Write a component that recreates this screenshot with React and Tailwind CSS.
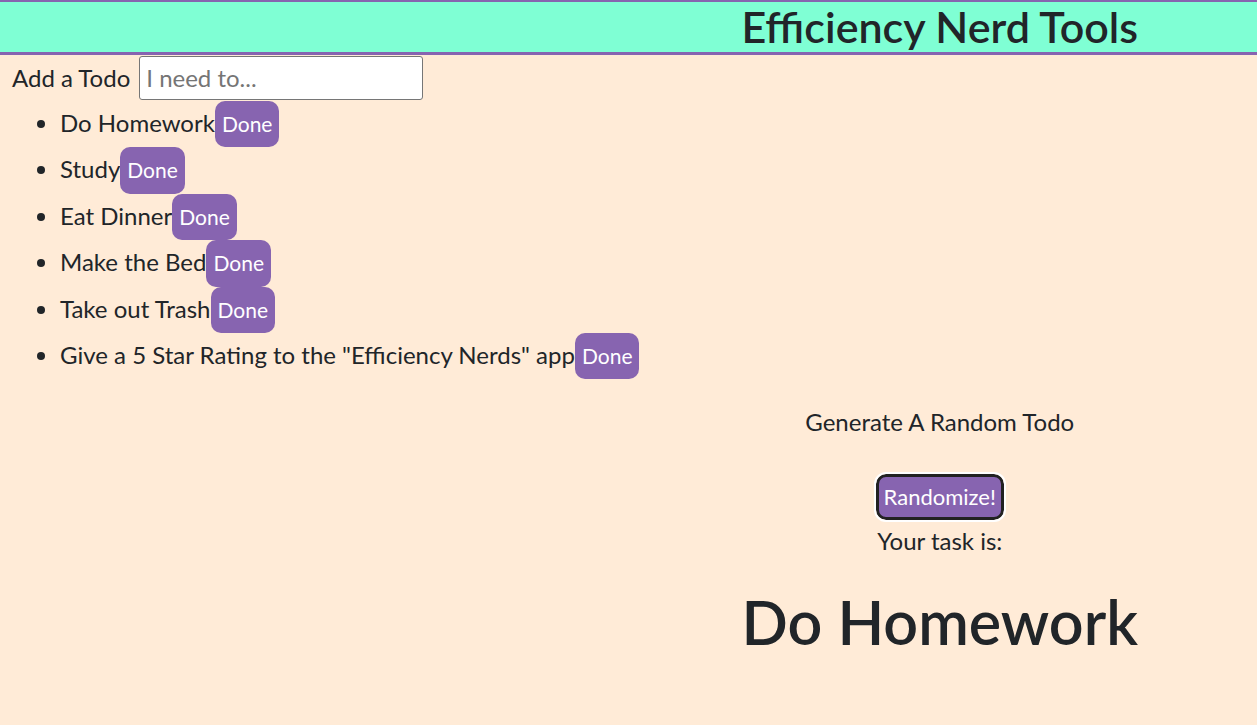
import React, {useState} from 'react';

const TODOS = [
	'Do Homework',
	'Study',
	'Eat Dinner',
	'Make the Bed',
	'Take out Trash',
	'Give a 5 Star Rating to the "Efficiency Nerds" app',
];

const App = () => {
	const [todos, setTodos] = useState(TODOS);
	const [task, setTask] = useState('Do Homework');

	const handleDone = (idx) => {
		setTodos(todos.filter((_, i) => i !== idx));
	};
	const handleRandom = () => {
		if (todos.length === 0) return;
		setTask(todos[Math.floor(Math.random() * todos.length)]);
	};

	return (
		<div className="min-h-[725px] bg-[#ffebd7] text-[#212529] font-['Lato','Open_Sans',sans-serif] text-[24px] leading-[30px]">
			<header className="grid grid-cols-2 bg-[#7fffd4] border-t-2 border-b-[3px] border-[#8764b0]">
				<div></div>
				<h1 className="text-center text-[43px] leading-[50px] font-semibold pr-[6px]">Efficiency Nerd Tools</h1>
			</header>

			<div className="flex items-center pl-3 h-[45px]">
				<label htmlFor="todo" className="mr-[9px]">Add a Todo</label>
				<input
					id="todo"
					type="text"
					placeholder="I need to..."
					className="w-[284px] h-[44px] bg-white border border-[#767676] rounded-[3px] px-[6px] text-[24px] placeholder:text-[#757575] outline-none"
				/>
			</div>

			<ul className="list-disc pl-[60px] mt-px">
				{todos.map((todo, idx) => (
					<li key={idx} className="h-[46.4px]">
						{todo}
						<button
							onClick={() => handleDone(idx)}
							className="inline-block bg-[#8764b0] text-white text-[21px] rounded-[10px] px-[7px] py-2 leading-[30.4px] align-baseline">
							Done
						</button>
					</li>
				))}
			</ul>

			<div className="grid grid-cols-2">
				<div></div>
				<div className="flex flex-col items-center text-center pt-[28px] pr-[6px]">
					<p>Generate A Random Todo</p>
					<button
						onClick={handleRandom}
						className="mt-[37px] bg-[#8764b0] text-white text-[22px] border-[3px] border-[#222] rounded-[10px] px-[5px] h-[46px] leading-[38px] outline-2 outline-white">
						Randomize!
					</button>
					<p className="mt-[6px]">Your task is:</p>
					<h2 className="mt-[30px] text-[61px] leading-[72px] font-semibold">{task}</h2>
				</div>
			</div>
		</div>
	);
};

export default App;
